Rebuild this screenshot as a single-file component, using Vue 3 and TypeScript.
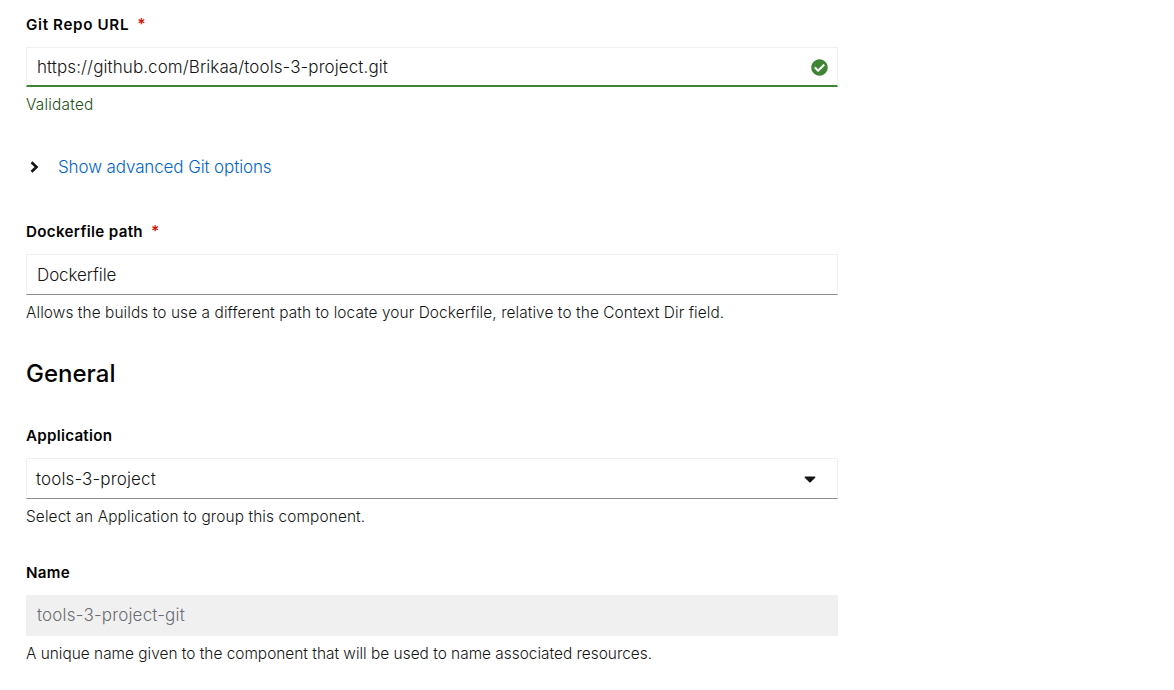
<script setup lang="ts">
import { ref } from 'vue'

const repoUrl = ref<string>('https://github.com/Brikaa/tools-3-project.git')
const dockerfilePath = ref<string>('Dockerfile')
const application = ref<string>('tools-3-project')
const name = ref<string>('tools-3-project-git')
</script>

<template>
  <form class="form" @submit.prevent>
    <div class="group group-repo">
      <label class="label label-repo" for="repo">Git Repo URL<span class="required">*</span></label>
      <div class="control control-valid">
        <input id="repo" v-model="repoUrl" class="input input-repo" type="text" spellcheck="false" />
        <svg class="check" viewBox="0 0 512 512" aria-hidden="true">
          <path fill="currentColor" d="M504 256c0 137-111 248-248 248S8 393 8 256 119 8 256 8s248 111 248 248zM227.300 387.300l184-184c6.200-6.200 6.200-16.400 0-22.600l-22.600-22.600c-6.200-6.200-16.400-6.200-22.600 0L216 308.100l-70.100-70.100c-6.200-6.200-16.400-6.200-22.600 0l-22.600 22.600c-6.200 6.200-6.200 16.400 0 22.600l104 104c6.200 6.300 16.400 6.300 22.600.1z" />
        </svg>
      </div>
      <p class="helper helper-valid">Validated</p>
    </div>

    <button class="expand" type="button">
      <svg class="chevron" viewBox="0 0 9 12" aria-hidden="true">
        <path d="M1.500 1.200 6.500 6 1.500 10.800" fill="none" stroke="currentColor" stroke-width="2.700" />
      </svg>
      <span>Show advanced Git options</span>
    </button>

    <div class="group">
      <label class="label label-docker" for="docker">Dockerfile path<span class="required">*</span></label>
      <div class="control">
        <input id="docker" v-model="dockerfilePath" class="input input-docker" type="text" spellcheck="false" />
      </div>
      <p class="helper helper-docker">Allows the builds to use a different path to locate your Dockerfile, relative to the Context Dir field.</p>
    </div>

    <h2 class="heading">General</h2>

    <div class="group">
      <span class="label">Application</span>
      <button class="control select" type="button">
        <span class="select-text">{{ application }}</span>
        <svg class="caret" viewBox="0 0 12 7" aria-hidden="true">
          <path d="M1.300.500h9.400c.7 0 1 .8.500 1.300L6.700 6.200a1 1 0 0 1-1.400 0L.8 1.800C.3 1.300.6.500 1.300.500z" fill="currentColor" />
        </svg>
      </button>
      <p class="helper helper-application">Select an Application to group this component.</p>
    </div>

    <div class="group group-name">
      <label class="label label-name" for="name">Name</label>
      <div class="control control-disabled">
        <input id="name" v-model="name" class="input input-name" type="text" disabled />
      </div>
      <p class="helper helper-name">A unique name given to the component that will be used to name associated resources.</p>
    </div>
  </form>
</template>

<style>
body {
  background: #fff;
}
</style>

<style scoped>
.form {
  box-sizing: border-box;
  width: 838px;
  height: 690px;
  padding: 13px 0 0 26px;
  overflow: hidden;
  color: #151515;
  font-family: Inter, "Liberation Sans", sans-serif;
  font-weight: 350;
}
.group {
  display: flex;
  flex-direction: column;
}
.label {
  height: 24px;
  margin-bottom: 10px;
  color: #030303;
  font-size: 15.2px;
  font-weight: 600;
  line-height: 24px;
  letter-spacing: 0.24px;
  white-space: nowrap;
}
.label-repo {
  letter-spacing: 0.64px;
}
.label-docker {
  letter-spacing: 0.3px;
}
.required {
  margin-left: 8px;
  color: #c9190b;
  font-size: 15.5px;
}
.control {
  box-sizing: border-box;
  display: flex;
  align-items: center;
  width: 100%;
  height: 41px;
  padding: 0 10px;
  border: 1px solid #f0f0f0;
  border-bottom-color: #8a8d90;
  background: #fff;
}
.control-valid {
  height: 40px;
  padding-right: 9px;
  border-bottom: 2px solid #3e8635;
}
.control-disabled {
  padding-bottom: 2px;
  border-color: #f0f0f0;
  background: #f0f0f0;
}
.input {
  flex: 1;
  min-width: 0;
  height: 27px;
  padding: 0;
  border: 0;
  outline: 0;
  background: transparent;
  color: #151515;
  font-family: inherit;
  font-size: 17px;
  font-weight: 350;
}
.input-repo {
  letter-spacing: 0.09px;
}
.input-docker {
  letter-spacing: -0.1px;
}
.input-name {
  color: #6a6e73;
  letter-spacing: 0.18px;
}
.check {
  width: 17px;
  height: 17px;
  margin-top: 1px;
  color: #3e8635;
}
.helper {
  height: 24px;
  margin: 6px 0 0;
  font-size: 15.4px;
  line-height: 24px;
  white-space: nowrap;
}
.helper-valid {
  color: #1e4f18;
  letter-spacing: 0.22px;
}
.helper-docker {
  letter-spacing: 0.09px;
}
.helper-application {
  letter-spacing: 0.12px;
}
.helper-name {
  letter-spacing: 0.01px;
}
.expand {
  display: flex;
  align-items: center;
  height: 24px;
  margin: 38px 0 41px;
  padding: 0 0 0 4px;
  border: 0;
  background: none;
  color: #06c;
  font-family: inherit;
  font-size: 17px;
  font-weight: 350;
  letter-spacing: -0.12px;
}
.chevron {
  width: 9px;
  height: 12px;
  margin-right: 19px;
  color: #151515;
}
.heading {
  height: 32px;
  margin: 33px 0 34px;
  color: #030303;
  font-size: 24px;
  font-weight: 500;
  line-height: 32px;
}
.select {
  justify-content: space-between;
  padding: 0 21px 0 9px;
  color: #151515;
  font-family: inherit;
  font-size: 17px;
  font-weight: 350;
  letter-spacing: 0.13px;
}
.caret {
  width: 12px;
  height: 7px;
  margin-top: 1px;
}
.group-name {
  margin-top: 32px;
}
</style>
